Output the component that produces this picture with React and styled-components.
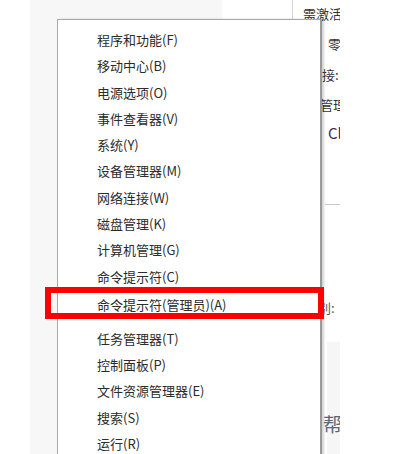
import React from 'react'
import styled, { createGlobalStyle } from 'styled-components'

const GlobalStyle = createGlobalStyle`
    html, body {
        margin: 0;
        padding: 0;
        background: #fff;
    }
    body {
        font-family: "Noto Sans CJK SC", "Noto Sans", sans-serif;
    }
`

const Page = styled.div`
    position: relative;
    width: 396px;
    height: 454px;
    overflow: hidden;
    background: #fff;
`

const Window = styled.div`
    display: flex;
    margin-left: 30px;
    width: 310px;
    height: 454px;
`

const LeftPane = styled.div`
    width: 262px;
    height: 100%;
    background: #f7f7f7;
    border-right: 1px solid #d4d4d4;
    display: flex;
    justify-content: flex-end;
`

const SearchBox = styled.div`
    width: 70px;
    height: 24px;
    background: #fff;
`

const RightPane = styled.div`
    flex: 1;
    height: 100%;
    overflow: hidden;
    background: #fff;
    display: flex;
    flex-direction: column;
    font-size: 13px;
    color: #333;
`

const InfoLine = styled.div`
    height: ${p => p.$h}px;
    line-height: ${p => p.$h}px;
    padding-left: ${p => p.$x}px;
    white-space: nowrap;
    color: ${p => p.$color || '#333'};
    font-size: ${p => p.$size || 13}px;
`

const Divider = styled.div`
    height: 1px;
    background: #c8c8c8;
    margin-left: 32px;
`

const HelpPanel = styled.div`
    margin-top: ${p => p.$top}px;
    margin-left: 34px;
    flex: 1;
    background: #f6f6f6;
    padding-top: 68px;
    font-size: 19px;
    color: #5b6778;
    white-space: nowrap;
    text-indent: -4px;
`

const Menu = styled.div`
    position: absolute;
    left: 57px;
    top: 19px;
    width: 265px;
    height: 460px;
    background: #fff;
    border: 1px solid #a9a9a9;
    border-right: 2px solid #9a9a9a;
    box-shadow: 2px 0 2px rgba(0, 0, 0, 0.18);
    padding-top: 7px;
    box-sizing: border-box;
    display: flex;
    flex-direction: column;
`

const MenuItem = styled.div`
    position: relative;
    height: 26.3px;
    line-height: 26.3px;
    padding-left: 39px;
    font-size: 13px;
    color: #2b2b2b;
    white-space: nowrap;
    margin-top: ${p => (p.$marked ? 2 : 0)}px;

    ${p => p.$marked && `
        &::after {
            content: '';
            position: absolute;
            left: -13px;
            right: -4px;
            top: -5px;
            bottom: -1px;
            border: 6px solid #ff0000;
        }
    `}
`

const Separator = styled.div`
    height: 7.4px;
`

const topItems = [
    '程序和功能(F)',
    '移动中心(B)',
    '电源选项(O)',
    '事件查看器(V)',
    '系统(Y)',
    '设备管理器(M)',
    '网络连接(W)',
    '磁盘管理(K)',
    '计算机管理(G)',
    '命令提示符(C)',
]

const bottomItems = [
    '任务管理器(T)',
    '控制面板(P)',
    '文件资源管理器(E)',
    '搜索(S)',
    '运行(R)',
]

export default function App() {
    return (
        <>
            <GlobalStyle />
            <Page>
                <Window>
                    <LeftPane>
                        <SearchBox />
                    </LeftPane>
                    <RightPane>
                        <InfoLine $h={28} $x={10}>需激活</InfoLine>
                        <InfoLine $h={32} $x={35}>零</InfoLine>
                        <InfoLine $h={30} $x={29}>接:</InfoLine>
                        <InfoLine $h={29} $x={27}>管理</InfoLine>
                        <InfoLine $h={28} $x={35} $color="#3b2a5c" $size={15}>Cl</InfoLine>
                        <InfoLine $h={57} $x={10} />
                        <Divider />
                        <InfoLine $h={90} $x={10} />
                        <InfoLine $h={26} $x={25} $color="#555">别:</InfoLine>
                        <HelpPanel $top={21}>帮</HelpPanel>
                    </RightPane>
                </Window>
                <Menu>
                    {topItems.map(label => (
                        <MenuItem key={label}>{label}</MenuItem>
                    ))}
                    <MenuItem $marked>命令提示符(管理员)(A)</MenuItem>
                    <Separator />
                    {bottomItems.map(label => (
                        <MenuItem key={label}>{label}</MenuItem>
                    ))}
                </Menu>
            </Page>
        </>
    )
}
